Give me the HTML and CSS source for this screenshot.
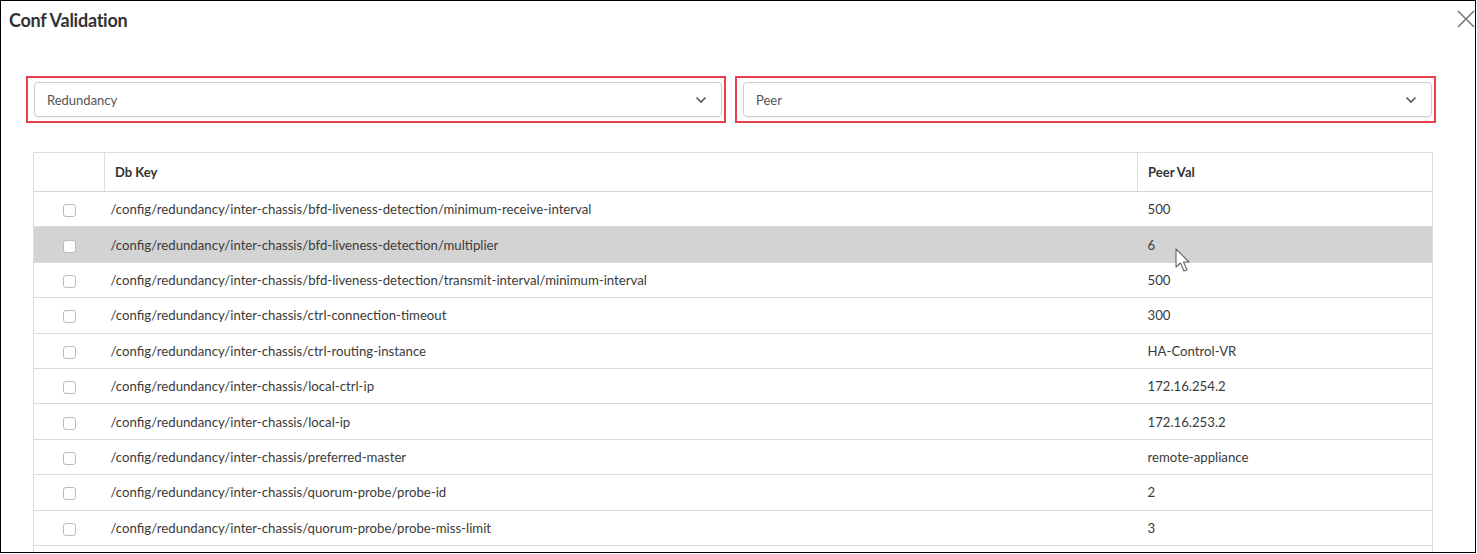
FILE: index.html
```html
<!DOCTYPE html>
<html>
<head>
	<title>Conf Validation</title>
	<link rel="stylesheet" href="styles.css">
</head>
<body>

<div class="modal">
	<div class="modal-head">
		<h1 class="modal-title">Conf Validation</h1>
		<span class="close">
			<svg width="18" height="18" viewBox="0 0 18 18"><path d="M1 1 L17 17 M17 1 L1 17" stroke="#777" stroke-width="1.6" fill="none"/></svg>
		</span>
	</div>

	<div class="filters">
		<div class="mark">
			<div class="select">
				<span>Redundancy</span>
				<svg class="chev" width="12" height="8" viewBox="0 0 12 8"><path d="M1.5 1.5 L6 6 L10.5 1.5" stroke="#555" stroke-width="1.6" fill="none"/></svg>
			</div>
		</div>
		<div class="mark wide">
			<div class="select">
				<span>Peer</span>
				<svg class="chev" width="12" height="8" viewBox="0 0 12 8"><path d="M1.5 1.5 L6 6 L10.5 1.5" stroke="#555" stroke-width="1.6" fill="none"/></svg>
			</div>
		</div>
	</div>

	<div class="table-wrap">
		<table class="grid">
			<thead>
				<tr><th class="col-check"></th><th class="col-key">Db Key</th><th class="col-val">Peer Val</th></tr>
			</thead>
			<tbody>
				<tr><td class="col-check"><span class="box"></span></td><td class="col-key">/config/redundancy/inter-chassis/bfd-liveness-detection/minimum-receive-interval</td><td class="col-val">500</td></tr>
				<tr class="hover"><td class="col-check"><span class="box"></span></td><td class="col-key">/config/redundancy/inter-chassis/bfd-liveness-detection/multiplier</td><td class="col-val">6</td></tr>
				<tr><td class="col-check"><span class="box"></span></td><td class="col-key">/config/redundancy/inter-chassis/bfd-liveness-detection/transmit-interval/minimum-interval</td><td class="col-val">500</td></tr>
				<tr><td class="col-check"><span class="box"></span></td><td class="col-key">/config/redundancy/inter-chassis/ctrl-connection-timeout</td><td class="col-val">300</td></tr>
				<tr><td class="col-check"><span class="box"></span></td><td class="col-key">/config/redundancy/inter-chassis/ctrl-routing-instance</td><td class="col-val">HA-Control-VR</td></tr>
				<tr><td class="col-check"><span class="box"></span></td><td class="col-key">/config/redundancy/inter-chassis/local-ctrl-ip</td><td class="col-val">172.16.254.2</td></tr>
				<tr><td class="col-check"><span class="box"></span></td><td class="col-key">/config/redundancy/inter-chassis/local-ip</td><td class="col-val">172.16.253.2</td></tr>
				<tr><td class="col-check"><span class="box"></span></td><td class="col-key">/config/redundancy/inter-chassis/preferred-master</td><td class="col-val">remote-appliance</td></tr>
				<tr><td class="col-check"><span class="box"></span></td><td class="col-key">/config/redundancy/inter-chassis/quorum-probe/probe-id</td><td class="col-val">2</td></tr>
				<tr><td class="col-check"><span class="box"></span></td><td class="col-key">/config/redundancy/inter-chassis/quorum-probe/probe-miss-limit</td><td class="col-val">3</td></tr>
				<tr><td class="col-check"><span class="box"></span></td><td class="col-key"></td><td class="col-val"></td></tr>
			</tbody>
		</table>
	</div>

	<!-- mouse pointer over the hovered row -->
	<svg class="cursor" width="18" height="26" viewBox="0 0 18 26"><path d="M1 1 L1 19 L5.5 15 L9 23 L12 21.8 L8.5 14 L14 14 Z" fill="#fff" stroke="#666" stroke-width="1.1" stroke-linejoin="round"/></svg>
</div>

</body>
</html>
```

FILE: styles.css
```css
body { margin: 0; padding: 0; font-family: Lato, "Open Sans", sans-serif; color: #333; background: #fff; }
.modal { position: relative; width: 1474px; height: 551px; border: 1px solid #000; overflow: hidden; background: #fff; }
.modal-head { display: flex; justify-content: space-between; align-items: flex-start; padding: 8px 0 0 8px; height: 42px; }
.modal-title { margin: 0; font-size: 18px; font-weight: bold; color: #333; letter-spacing: -0.25px; line-height: 22px; }
.close { display: block; margin-top: 1px; }

.filters { display: flex; gap: 9px; padding: 25px 0 0 25px; }
.mark { width: 688px; height: 35px; border: 2px solid #e8404a; padding: 4px 2px 4px 6px; }
.mark.wide { width: 689px; }
.select { height: 33px; border: 1px solid #ccc; border-radius: 4px; display: flex; align-items: center; justify-content: space-between; padding: 0 14px 0 12px; font-size: 13px; color: #555; box-shadow: 0 1px 2px rgba(0,0,0,0.06); }

.table-wrap { padding: 29px 0 0 32px; }
.grid { width: 1400px; border-collapse: collapse; font-size: 13.2px; border: 1px solid #dcdcdc; }
.grid th { text-align: left; font-weight: bold; font-size: 13px; height: 38px; padding: 0 8px 0 10px; border-bottom: 1px solid #d6d6d6; border-left: 1px solid #dcdcdc; color: #333; }
.grid th:first-child { border-left: none; }
.grid td { height: 34.4px; border-bottom: 1px solid #dadada; color: #3a3a3a; }
.grid .col-check { width: 50px; text-align: center; padding: 0 10px; }
.grid td.col-key { padding: 0 8px 0 6px; }
.grid .col-val { width: 276px; }
.grid td.col-val { padding: 0 8px 0 10px; }
.grid tr.hover td { background: #d3d3d3; }
.box { display: inline-block; width: 11px; height: 11px; border: 1px solid #bbb; border-radius: 3px; background: #fff; vertical-align: middle; }

.cursor { position: absolute; left: 1174px; top: 247px; }
```
